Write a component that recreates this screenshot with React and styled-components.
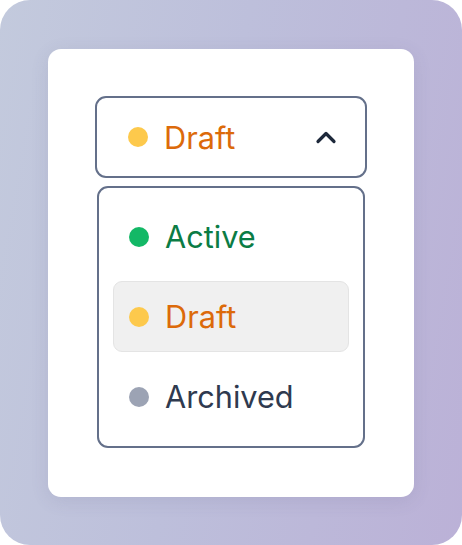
import React, {useState} from "react";
import styled, {createGlobalStyle} from "styled-components";

const Global = createGlobalStyle`
html, body {
  margin: 0;
  padding: 0;
  background: #ffffff;
}
body {
  font-family: Inter, "Noto Sans", sans-serif;
}
`;

const Frame = styled.div`
width: 462px;
height: 545px;
box-sizing: border-box;
border-radius: 30px;
background: linear-gradient(100deg, #c3cadd 0%, #bdbfdb 45%, #bbb1d7 100%);
padding: 49px 48px 48px 48px;
`;

const Card = styled.div`
height: 100%;
box-sizing: border-box;
background: #ffffff;
border-radius: 13px;
box-shadow: 0 4px 18px rgba(80, 80, 120, 0.12);
padding: 47px 47px 0 47px;
display: flex;
flex-direction: column;
gap: 8px;
`;

const Trigger = styled.button`
height: 82px;
box-sizing: border-box;
border: 2px solid #64708a;
border-radius: 11px;
background: #ffffff;
display: flex;
align-items: center;
padding: 0 28px 0 31px;
cursor: pointer;
font: inherit;
`;

const Menu = styled.div`
margin: 0 2px;
height: 262px;
box-sizing: border-box;
border: 2px solid #64708a;
border-radius: 11px;
padding: 13px 14px;
display: flex;
flex-direction: column;
gap: 9px;
`;

const Item = styled.div`
height: 71px;
box-sizing: border-box;
display: flex;
align-items: center;
padding: 0 15px;
border-radius: 9px;
border: 1px solid ${p => (p.$selected ? "#e4e4e4" : "transparent")};
background: ${p => (p.$selected ? "#f0f0f0" : "transparent")};
`;

const Dot = styled.span`
width: 20px;
height: 20px;
border-radius: 50%;
flex: none;
background: ${p => p.$color};
margin-right: 16px;
`;

const Label = styled.span`
font-size: 30.7px;
line-height: 1;
color: ${p => p.$color};
padding-top: 2px;
`;

const Chevron = styled.svg`
margin-left: auto;
width: 22px;
height: 14px;
`;

const statuses = [
    {name: "Active", dot: "#13b866", text: "#0b7c45"},
    {name: "Draft", dot: "#fdc94c", text: "#dc6a0a"},
    {name: "Archived", dot: "#9ca3b4", text: "#2f3a4f"},
];

export default function App() {
    const [selected] = useState("Draft");
    const current = statuses.find(s => s.name === selected);

    return (
        <>
            <Global/>
            <Frame>
                <Card>
                    <Trigger>
                        <Dot $color={current.dot}/>
                        <Label $color={current.text}>{current.name}</Label>
                        <Chevron viewBox="0 0 22 14">
                            <path d="M3 11.5 L11 3.5 L19 11.5" fill="none" stroke="#1e293b" strokeWidth="3.2"
                                  strokeLinecap="round" strokeLinejoin="round"/>
                        </Chevron>
                    </Trigger>
                    <Menu>
                        {statuses.map(s => (
                            <Item key={s.name} $selected={s.name === selected}>
                                <Dot $color={s.dot}/>
                                <Label $color={s.text}>{s.name}</Label>
                            </Item>
                        ))}
                    </Menu>
                </Card>
            </Frame>
        </>
    )
}
